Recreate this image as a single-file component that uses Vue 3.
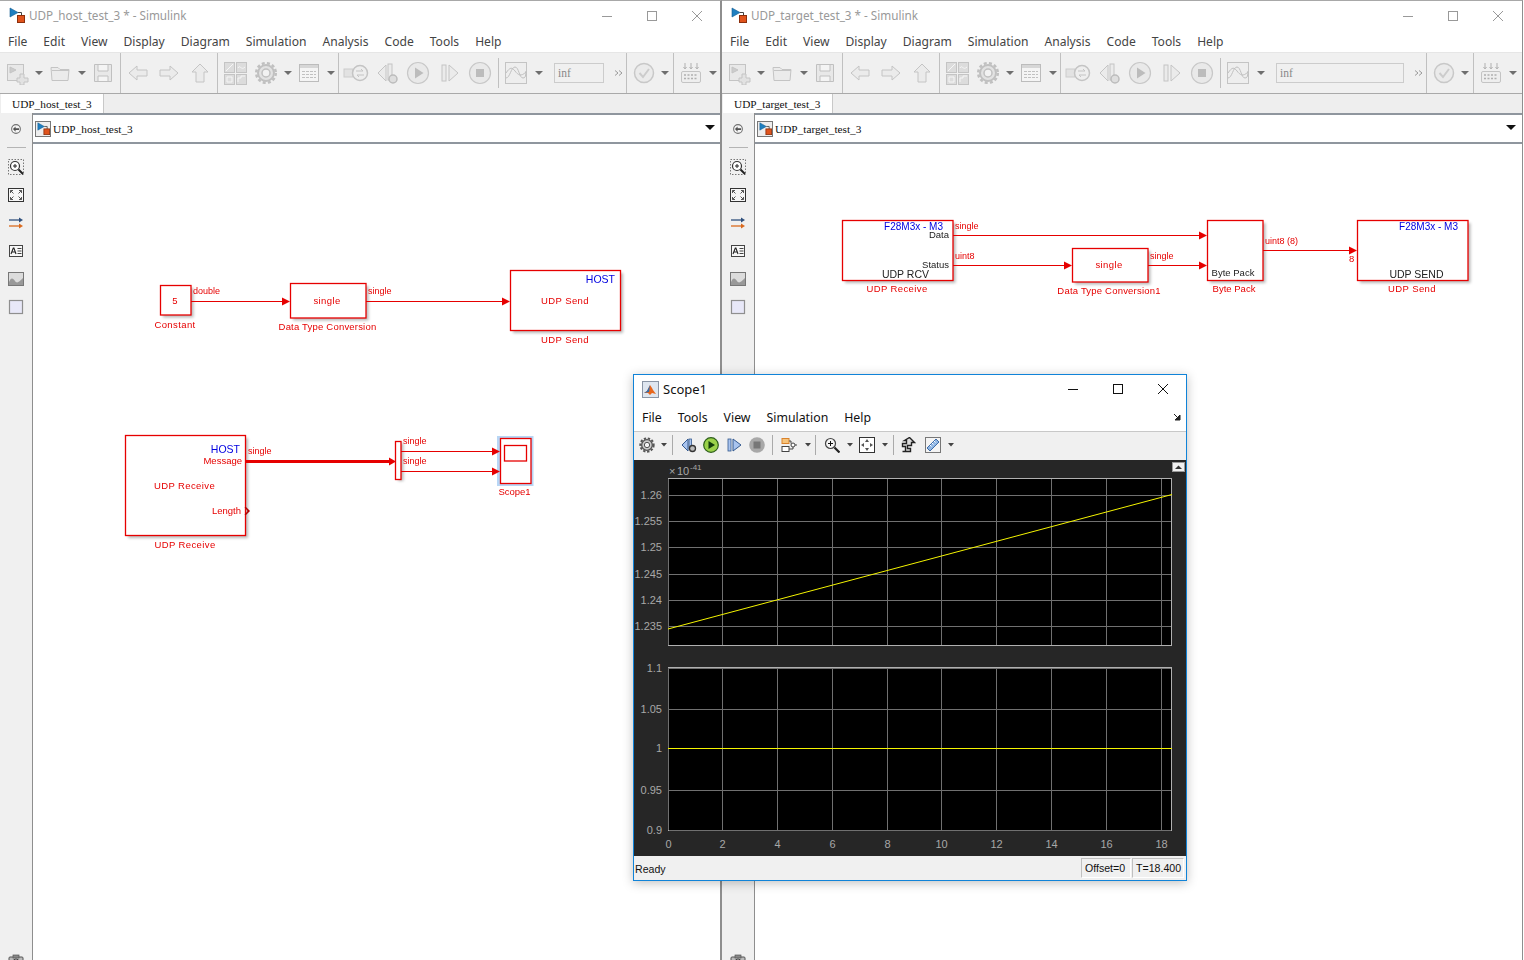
<script setup>
import { computed } from 'vue'

// toolbar: icon id, left position in the window, width
const baseTools = [
  ['new', 5, 24], ['dd', 35, 8], ['open', 48, 24], ['dd', 78, 8], ['save', 91, 24], ['sep', 120, 1],
  ['back', 126, 24], ['fwd', 157, 24], ['up', 188, 24], ['sep', 217, 1],
  ['lib', 223, 24], ['gear', 254, 24], ['dd', 284, 8], ['expl', 297, 24], ['dd', 327, 8], ['sep', 338, 1],
  ['rec', 343, 26], ['stepb', 376, 24], ['play', 406, 24], ['step', 437, 24], ['stop', 468, 24], ['sepshort', 498, 1],
  ['scope', 504, 24], ['dd', 535, 8]
]

const toolsFor = (infWidth) => {
  const shift = infWidth - 50
  const list = [
    ...baseTools,
    ['inf', 554, infWidth],
    ['more', 614 + shift, 10],
    ['sep', 626 + shift, 1],
    ['check', 632 + shift, 24],
    ['dd', 661 + shift, 8],
    ['sep', 673 + shift, 1],
    ['keys', 679 + shift, 24],
    ['dd', 709 + shift, 8]
  ]
  let end = 0
  return list.map(([icon, x, w]) => {
    const item = { icon, w, gap: x - end }
    end = x + w
    return item
  })
}

const menus = ['File', 'Edit', 'View', 'Display', 'Diagram', 'Simulation', 'Analysis', 'Code', 'Tools', 'Help']
const paletteIcons = ['pzoom', 'pfit', 'parrow', 'ptext', 'pimg', 'pbox']

const windows = computed(() => [
  { id: 'host', name: 'UDP_host_test_3', tools: toolsFor(50), viewBox: '33 144 687 816' },
  { id: 'target', name: 'UDP_target_test_3', tools: toolsFor(128), viewBox: '755 144 767 816' }
])

// scope axes
const xPos = (t) => Math.floor(668 + t * 27.39) + 0.5
const xTicks = [0, 2, 4, 6, 8, 10, 12, 14, 16, 18].map((t) => ({ t, x: xPos(t) }))
const topTicks = [
  ['1.26', 495.5], ['1.255', 521.5], ['1.25', 547.5], ['1.245', 574.5], ['1.24', 600.5], ['1.235', 626.5]
]
const lowTicks = [['1.1', 668.5], ['1.05', 709.5], ['1', 748.5], ['0.95', 790.5], ['0.9', 830.5]]

const scopeMenus = ['File', 'Tools', 'View', 'Simulation', 'Help']
</script>

<template>
  <div class="desktop">
    <!-- shared toolbar icons -->
    <svg class="defs" width="0" height="0">
      <symbol id="simlogo" viewBox="0 0 16 16">
        <path d="M1 1l8 4.5-8 4.500z" fill="#1f7fc0" stroke="#125a90" stroke-width=".6" />
        <path d="M9 5.500h3.500V9" fill="none" stroke="#444" />
        <rect x="8.500" y="8.500" width="7" height="7" fill="#e0531c" stroke="#8c2f0c" />
      </symbol>
      <symbol id="dd" viewBox="0 0 8 24"><path d="M0 10h8l-4 4z" fill="#6e6e6e" /></symbol>
      <symbol id="new" viewBox="0 0 24 24" fill="#e8e8e8" stroke="#c4c4c4">
        <rect x="2.500" y="3.500" width="16" height="16" />
        <path d="M5 6l6 3-6 3z" fill="#cccccc" />
        <path d="M15 13h4v4h4v4h-4v3h-4v-3h-3v-4h3z" fill="#e2e2e2" />
      </symbol>
      <symbol id="open" viewBox="0 0 24 24" fill="#ebebeb" stroke="#c4c4c4">
        <path d="M3 6.500h7l2 2h9l-1 11H4z" />
        <path d="M4 9.500h17" fill="none" />
      </symbol>
      <symbol id="save" viewBox="0 0 24 24" fill="#e8e8e8" stroke="#c0c0c0">
        <path d="M3.500 3.500h17v17h-17z" />
        <path d="M7 4v6h10V4M7 20v-5h10v5" fill="#f4f4f4" />
      </symbol>
      <symbol id="back" viewBox="0 0 24 24"><path d="M3 12l8-7v4h10v6H11v4z" fill="#ebebeb" stroke="#c4c4c4" /></symbol>
      <symbol id="fwd" viewBox="0 0 24 24"><path d="M21 12l-8-7v4H3v6h10v4z" fill="#ebebeb" stroke="#c4c4c4" /></symbol>
      <symbol id="up" viewBox="0 0 24 24"><path d="M12 3l8 8h-4v10H8V11H4z" fill="#ebebeb" stroke="#c4c4c4" /></symbol>
      <symbol id="lib" viewBox="0 0 24 24" fill="#dcdcdc" stroke="#c4c4c4">
        <rect x="1.500" y="1.500" width="10" height="10" /><rect x="13.500" y="1.500" width="10" height="10" />
        <rect x="1.500" y="13.500" width="10" height="10" /><rect x="13.500" y="13.500" width="10" height="10" />
        <path d="M3 10l7-7M15 7c2-4 3 3 7-1M4 16h5v5H4zM15 21v-4h3v-2h4" fill="none" stroke="#f6f6f6" />
      </symbol>
      <symbol id="gear" viewBox="0 0 24 24">
        <circle cx="12" cy="12" r="8" fill="#e2e2e2" stroke="#c0c0c0" stroke-width="2" />
        <circle cx="12" cy="12" r="9.800" fill="none" stroke="#c0c0c0" stroke-width="2.500" stroke-dasharray="3 2.200" />
        <circle cx="12" cy="12" r="4" fill="#f2f2f2" stroke="#c0c0c0" stroke-width="1.500" />
      </symbol>
      <symbol id="expl" viewBox="0 0 24 24">
        <rect x="2.500" y="3.500" width="19" height="17" fill="#f4f4f4" stroke="#bcbcbc" />
        <path d="M3 4h18v3H3z" fill="#d6d6d6" />
        <path d="M5 10.500h14M5 13.500h14M5 16.500h14" stroke="#c0c0c0" stroke-dasharray="3 1" />
      </symbol>
      <symbol id="rec" viewBox="0 0 26 24">
        <rect x="1" y="8" width="9" height="8" fill="#e2e2e2" stroke="#cccccc" />
        <circle cx="17" cy="12" r="7.500" fill="#eeeeee" stroke="#c4c4c4" stroke-width="1.500" />
        <path d="M13 10h7l-2-2M21 14h-7l2 2" fill="none" stroke="#c4c4c4" />
      </symbol>
      <symbol id="stepb" viewBox="0 0 24 24">
        <path d="M10 4L2 12l8 8z" fill="#ebebeb" stroke="#c4c4c4" />
        <rect x="12" y="3" width="4" height="16" fill="#ebebeb" stroke="#c4c4c4" />
        <circle cx="17" cy="18" r="4" fill="#dedede" stroke="#bcbcbc" stroke-width="1.500" />
      </symbol>
      <symbol id="play" viewBox="0 0 24 24">
        <circle cx="12" cy="12" r="10.500" fill="#e9e9e9" stroke="#c8c8c8" stroke-width="1.200" />
        <path d="M9 6.500L17.500 12 9 17.500z" fill="#bcbcbc" />
      </symbol>
      <symbol id="step" viewBox="0 0 24 24">
        <rect x="5" y="4" width="4" height="16" fill="#ebebeb" stroke="#c4c4c4" />
        <path d="M12 4l9 8-9 8z" fill="#ebebeb" stroke="#c4c4c4" />
      </symbol>
      <symbol id="stop" viewBox="0 0 24 24">
        <circle cx="12" cy="12" r="10.500" fill="#e9e9e9" stroke="#c8c8c8" stroke-width="1.200" />
        <rect x="8" y="8" width="8" height="8" fill="#bcbcbc" />
      </symbol>
      <symbol id="scope" viewBox="0 0 24 24">
        <rect x="1.500" y="1.500" width="21" height="21" fill="#eeeeee" stroke="#c4c4c4" />
        <path d="M2 17c4 0 5-11 9-11s4 11 8 11 2-6 3-7M2 12c4-6 6-6 9-2s6 6 11 1" fill="none" stroke="#c0c0c0" />
      </symbol>
      <symbol id="check" viewBox="0 0 24 24">
        <circle cx="12" cy="12" r="9.500" fill="#ebebeb" stroke="#c8c8c8" stroke-width="1.500" />
        <path d="M7.500 12l3.500 4 6-8" fill="none" stroke="#cccccc" stroke-width="2" />
      </symbol>
      <symbol id="keys" viewBox="0 0 24 24">
        <rect x="2.500" y="10.500" width="19" height="11" rx="1.500" fill="#eeeeee" stroke="#c4c4c4" />
        <path d="M5 14h14M5 17.500h14" stroke="#b0b0b0" stroke-width="1.500" stroke-dasharray="2 1.500" />
        <path d="M6 2v5M12 2v5M18 2v5M4.500 6L6 8l1.500-2M10.500 6L12 8l1.500-2M16.500 6L18 8l1.500-2" fill="none" stroke="#b0b0b0" />
      </symbol>
      <symbol id="more" viewBox="0 0 10 24">
        <path d="M1 9.500l3 2.500-3 2.500M5 9.500l3 2.500-3 2.500" fill="none" stroke="#9a9a9a" />
      </symbol>

      <symbol id="pback" viewBox="0 0 16 16">
        <circle cx="8" cy="8" r="5" fill="#f4f4f4" stroke="#707070" stroke-width="1.200" />
        <path d="M4.500 8l3-3v2h4v2h-4v2z" fill="#505050" />
      </symbol>
      <symbol id="pzoom" viewBox="0 0 16 16">
        <rect x=".5" y=".5" width="15" height="15" fill="none" stroke="#777" stroke-dasharray="1.500 1.500" />
        <circle cx="7" cy="7" r="4.500" fill="#fff" stroke="#333" stroke-width="1.200" />
        <path d="M5 7h4M7 5v4" stroke="#222" />
        <path d="M10.500 10.500l4.500 4.500" stroke="#222" stroke-width="2" />
      </symbol>
      <symbol id="pfit" viewBox="0 0 16 16">
        <rect x=".5" y="1.500" width="15" height="13" fill="#f6f6f6" stroke="#333" />
        <path d="M2.500 3.500l3 3M2.500 3.500h2.500M2.500 3.500V6M13.500 3.500l-3 3M13.500 3.500H11M13.500 3.500V6M2.500 12.500l3-3M2.500 12.500H5M2.500 12.500V10M13.500 12.500l-3-3M13.500 12.500H11M13.500 12.500V10" fill="none" stroke="#555" />
      </symbol>
      <symbol id="parrow" viewBox="0 0 16 16">
        <path d="M1 5h11" stroke="#2f4f7c" stroke-width="1.300" /><path d="M11 2.500L15 5l-4 2.500z" fill="#2f4f7c" />
        <path d="M1 11h11" stroke="#d9691e" stroke-width="1.300" /><path d="M11 8.500l4 2.500-4 2.500z" fill="#d9691e" />
      </symbol>
      <symbol id="ptext" viewBox="0 0 16 16">
        <rect x="1.500" y="2.500" width="13" height="11" fill="#f8f8f8" stroke="#444" />
        <path d="M3 11l2.300-6h.6L8 11M4 9h3" fill="none" stroke="#222" stroke-width="1.100" />
        <path d="M9.500 5.500h4M9.500 8h4M9.500 10.500h4" stroke="#444" />
      </symbol>
      <symbol id="pimg" viewBox="0 0 16 16">
        <rect x=".5" y="1.500" width="15" height="13" fill="#dcdcdc" stroke="#777" />
        <path d="M1 11c2-5 4-4 6-1s4 1 8-3v7H1z" fill="#999" />
      </symbol>
      <symbol id="pbox" viewBox="0 0 16 16">
        <rect x="1.500" y="1.500" width="13" height="13" fill="#e8e8f8" stroke="#8f8f8f" stroke-width="1.200" />
      </symbol>
      <symbol id="pcam" viewBox="0 0 16 16">
        <rect x="1" y="4" width="14" height="10" rx="1" fill="#bbb" stroke="#555" />
        <rect x="5" y="2" width="6" height="3" fill="#888" stroke="#555" stroke-width=".7" />
        <circle cx="8" cy="9" r="3" fill="#eee" stroke="#444" />
      </symbol>
    </svg>

    <section v-for="win in windows" :key="win.id" class="sim-win" :class="'sim-' + win.id">
      <header class="title-bar">
        <svg class="app-logo" width="16" height="16"><use href="#simlogo" /></svg>
        <span class="title-text">{{ win.name }} * - Simulink</span>
        <div class="win-btns">
          <svg width="10" height="10"><path d="M0 5.500h10" stroke="#999" /></svg>
          <svg width="10" height="10"><rect x=".5" y=".5" width="9" height="9" fill="none" stroke="#999" /></svg>
          <svg width="10" height="10"><path d="M0 0l10 10M10 0L0 10" stroke="#999" /></svg>
        </div>
      </header>

      <nav class="menu-bar">
        <span v-for="m in menus" :key="m">{{ m }}</span>
      </nav>

      <div class="tool-bar">
        <template v-for="(t, i) in win.tools" :key="i">
          <i v-if="t.icon === 'sep'" class="sep" :style="{ marginLeft: t.gap + 'px' }"></i>
          <i v-else-if="t.icon === 'sepshort'" class="sep short" :style="{ marginLeft: t.gap + 'px' }"></i>
          <span v-else-if="t.icon === 'inf'" class="inf-box" :style="{ marginLeft: t.gap + 'px', width: t.w + 'px' }">inf</span>
          <svg v-else :width="t.w" height="24" :style="{ marginLeft: t.gap + 'px' }"><use :href="'#' + t.icon" /></svg>
        </template>
      </div>

      <div class="tab-bar">
        <span class="tab">{{ win.name }}</span>
      </div>

      <div class="work">
        <aside class="palette">
          <svg class="p-back" width="14" height="14"><use href="#pback" /></svg>
          <i class="p-rule"></i>
          <svg v-for="p in paletteIcons" :key="p" class="p-icon" width="16" height="16"><use :href="'#' + p" /></svg>
          <svg class="p-cam" width="16" height="16"><use href="#pcam" /></svg>
        </aside>

        <div class="editor">
          <div class="address">
            <span class="addr-logo"><svg width="13" height="13"><use href="#simlogo" /></svg></span>
            <span class="addr-text">{{ win.name }}</span>
            <svg class="addr-drop" width="10" height="6"><path d="M0 0h10L5 5z" fill="#111" /></svg>
          </div>

          <!-- host model -->
          <svg v-if="win.id === 'host'" class="canvas" :viewBox="win.viewBox">
            <g class="shadows">
              <rect x="163" y="288" width="30.500" height="29.500" />
              <rect x="293" y="286" width="75.500" height="34.500" />
              <rect x="513" y="273" width="110" height="60" />
              <rect x="128" y="438" width="120" height="100" />
              <rect x="398" y="443" width="5.500" height="38" />
            </g>
            <rect x="497" y="436" width="36.500" height="50" fill="#b8d6f5" />
            <g class="blocks">
              <rect x="160.500" y="285.500" width="30.500" height="29.500" />
              <rect x="290.500" y="283.500" width="75.500" height="34.500" />
              <rect x="510.500" y="270.500" width="110" height="60" />
              <rect x="125.500" y="435.500" width="120" height="100" />
              <rect x="395.500" y="441.500" width="5.500" height="38" />
              <rect x="500.500" y="438.500" width="30.500" height="45" />
              <rect x="504.500" y="445.500" width="22" height="15.500" />
            </g>
            <g class="wires">
              <path d="M191 301.500h92M366 301.500h137M401 451.500h91M401 471.500h91" />
              <path d="M246 461.500h144" class="thick" />
            </g>
            <g class="heads">
              <path d="M282 297.500l8 4-8 4zM502 297.500l8 4-8 4zM389 457.500l7 4-7 4zM492 447.500l8 4-8 4zM492 467.500l8 4-8 4z" />
              <path d="M246 507l4 4-4 4-1.500 0 3-4-3-4z" class="dark" />
            </g>
            <g class="labels">
              <text x="175" y="304" text-anchor="middle">5</text>
              <text x="175" y="328" text-anchor="middle" class="wide">Constant</text>
              <text x="193" y="294" class="sig">double</text>
              <text x="327" y="304" text-anchor="middle" class="wide">single</text>
              <text x="327.500" y="330" text-anchor="middle" class="mid">Data Type Conversion</text>
              <text x="368" y="294" class="sig">single</text>
              <text x="615" y="283" text-anchor="end" class="blue">HOST</text>
              <text x="565" y="304" text-anchor="middle" class="wide">UDP Send</text>
              <text x="565" y="343" text-anchor="middle" class="wide">UDP Send</text>
              <text x="240" y="453" text-anchor="end" class="blue">HOST</text>
              <text x="242" y="464" text-anchor="end">Message</text>
              <text x="184.500" y="489" text-anchor="middle" class="wide">UDP Receive</text>
              <text x="241" y="514" text-anchor="end">Length</text>
              <text x="185" y="548" text-anchor="middle" class="wide">UDP Receive</text>
              <text x="248" y="454" class="sig">single</text>
              <text x="403" y="444" class="sig">single</text>
              <text x="403" y="464" class="sig">single</text>
              <text x="514.500" y="495" text-anchor="middle">Scope1</text>
            </g>
          </svg>

          <!-- target model -->
          <svg v-else class="canvas" :viewBox="win.viewBox">
            <g class="shadows">
              <rect x="845" y="223" width="110.500" height="60" />
              <rect x="1075" y="251" width="75.500" height="33.500" />
              <rect x="1210" y="223" width="55.500" height="60" />
              <rect x="1360" y="223" width="110.500" height="60" />
            </g>
            <g class="blocks">
              <rect x="842.500" y="220.500" width="110.500" height="60" />
              <rect x="1072.500" y="248.500" width="75.500" height="33.500" />
              <rect x="1207.500" y="220.500" width="55.500" height="60" />
              <rect x="1357.500" y="220.500" width="110.500" height="60" />
            </g>
            <g class="wires">
              <path d="M953 235.500h247M953 265.500h112M1148 265.500h52M1263 250.500h87" />
            </g>
            <g class="heads">
              <path d="M1199 231.500l8 4-8 4zM1064 261.500l8 4-8 4zM1199 261.500l8 4-8 4zM1349 246.500l8 4-8 4z" />
            </g>
            <g class="labels">
              <text x="943" y="230" text-anchor="end" class="blue f28">F28M3x - M3</text>
              <text x="949" y="238" text-anchor="end" class="ink">Data</text>
              <text x="949" y="268" text-anchor="end" class="ink">Status</text>
              <text x="905.500" y="278" text-anchor="middle" class="ink big">UDP RCV</text>
              <text x="897" y="292" text-anchor="middle" class="wide">UDP Receive</text>
              <text x="955" y="229" class="sig">single</text>
              <text x="955" y="259" class="sig">uint8</text>
              <text x="1109" y="268" text-anchor="middle" class="wide">single</text>
              <text x="1109" y="294" text-anchor="middle" class="mid">Data Type Conversion1</text>
              <text x="1150" y="259" class="sig">single</text>
              <text x="1233" y="276" text-anchor="middle" class="ink">Byte Pack</text>
              <text x="1234" y="292" text-anchor="middle">Byte Pack</text>
              <text x="1265" y="244" class="sig">uint8 (8)</text>
              <text x="1349" y="262">8</text>
              <text x="1458" y="230" text-anchor="end" class="blue f28">F28M3x - M3</text>
              <text x="1416.500" y="278" text-anchor="middle" class="ink big">UDP SEND</text>
              <text x="1412" y="292" text-anchor="middle" class="wide">UDP Send</text>
            </g>
          </svg>
        </div>
      </div>
    </section>

    <!-- floating scope window -->
    <section class="scope-win">
      <header class="scope-title">
        <svg class="scope-logo" width="17" height="17" viewBox="0 0 17 17">
          <rect x=".5" y=".5" width="16" height="16" fill="#dfe6ef" stroke="#8a95a5" />
          <path d="M2 12l3-2 3-6 2 3 1 2 3 4-4-1-2 2-2-2z" fill="#e8671c" />
          <path d="M2 12l3-2 3-6-1 7z" fill="#2a6fb5" />
        </svg>
        <span>Scope1</span>
        <div class="scope-btns">
          <svg width="10" height="10"><path d="M0 5.500h10" stroke="#111" /></svg>
          <svg width="10" height="10"><rect x=".5" y=".5" width="9" height="9" fill="none" stroke="#111" /></svg>
          <svg width="10" height="10"><path d="M0 0l10 10M10 0L0 10" stroke="#111" /></svg>
        </div>
      </header>

      <nav class="scope-menu">
        <span v-for="m in scopeMenus" :key="m">{{ m }}</span>
        <svg class="undock" width="7" height="7"><path d="M0 0l5 5M6 1v5H1z" stroke="#222" fill="#222" /></svg>
      </nav>

      <div class="scope-tools">
        <svg width="16" height="16" viewBox="0 0 24 24">
          <circle cx="12" cy="12" r="8" fill="#ccc" stroke="#555" stroke-width="2" />
          <circle cx="12" cy="12" r="10" fill="none" stroke="#555" stroke-width="3" stroke-dasharray="3.500 2.500" />
          <circle cx="12" cy="12" r="4" fill="#f4f4f4" stroke="#555" stroke-width="1.500" />
        </svg>
        <svg class="m6" width="6" height="4"><path d="M0 0h6L3 3.500z" fill="#444" /></svg>
        <i class="st-sep m5"></i>
        <svg class="m8" width="16" height="16" viewBox="0 0 16 16">
          <path d="M7 2L1 8l6 6z" fill="#a9c4ee" stroke="#33598f" />
          <rect x="8" y="2" width="2.500" height="10" fill="#a9c4ee" stroke="#33598f" stroke-width=".8" />
          <circle cx="11.500" cy="11.500" r="3" fill="#bbb" stroke="#333" stroke-width="1.300" />
        </svg>
        <svg class="m6" width="16" height="16" viewBox="0 0 16 16">
          <circle cx="8" cy="8" r="7.300" fill="#9ad24a" stroke="#2c5e1a" stroke-width="1.200" />
          <path d="M5.500 4L12 8l-6.500 4z" fill="#123d0b" />
        </svg>
        <svg class="m8" width="15" height="16" viewBox="0 0 15 16">
          <rect x="1" y="2" width="3" height="12" fill="#a9c4ee" stroke="#33598f" stroke-width=".8" />
          <path d="M6 2l8 6-8 6z" fill="#a9c4ee" stroke="#33598f" />
        </svg>
        <svg class="m7" width="16" height="16" viewBox="0 0 16 16">
          <circle cx="8" cy="8" r="7.800" fill="#a8a8a8" />
          <rect x="4.500" y="4.500" width="7" height="7" fill="#777" />
        </svg>
        <i class="st-sep m7"></i>
        <svg class="m8" width="17" height="16" viewBox="0 0 17 16">
          <rect x="1" y="1.500" width="7" height="5" fill="#f6c47c" stroke="#d9822b" />
          <rect x="1" y="9.500" width="7" height="5" fill="#fff" stroke="#444" />
          <circle cx="12" cy="8" r="2" fill="#fff" stroke="#444" />
          <path d="M8 4h2v2.500M8 12h4v-2M14 8h2" fill="none" stroke="#444" />
        </svg>
        <svg class="m7" width="6" height="4"><path d="M0 0h6L3 3.500z" fill="#444" /></svg>
        <i class="st-sep m4"></i>
        <svg class="m8" width="16" height="16" viewBox="0 0 16 16">
          <circle cx="6.500" cy="6.500" r="5" fill="#f4f4f4" stroke="#444" stroke-width="1.200" />
          <path d="M4 6.500h5M6.500 4v5" stroke="#111" />
          <path d="M10.500 10.500l5 5" stroke="#222" stroke-width="2.200" />
        </svg>
        <svg class="m7" width="6" height="4"><path d="M0 0h6L3 3.500z" fill="#444" /></svg>
        <svg class="m6" width="16" height="16" viewBox="0 0 16 16">
          <rect x=".5" y=".5" width="15" height="15" fill="#fff" stroke="#333" />
          <path d="M8 2l2 3H6zM8 14l2-3H6zM2 8l3-2v4zM14 8l-3-2v4z" fill="#555" />
        </svg>
        <svg class="m7" width="6" height="4"><path d="M0 0h6L3 3.500z" fill="#444" /></svg>
        <i class="st-sep m5"></i>
        <svg class="m7" width="15" height="16" viewBox="0 0 15 16">
          <path d="M1.500 14.500h3v-5h-3v-3h4v-3h-2l5-3 5 5h-3v3h-4v3h3v3h-8z" fill="#ddd" stroke="#222" stroke-width="1.400" />
        </svg>
        <svg class="m9" width="16" height="16" viewBox="0 0 16 16">
          <rect x=".5" y=".5" width="15" height="15" fill="#f4f4f4" stroke="#777" />
          <path d="M2 11L11 2l3 3-9 9z" fill="#8fb6e4" stroke="#3f6ca8" />
          <path d="M5 8l1.500 1.500M7 6l1.500 1.500M9 4l1.500 1.500" stroke="#fff" />
        </svg>
        <svg class="m7" width="6" height="4"><path d="M0 0h6L3 3.500z" fill="#444" /></svg>
      </div>

      <svg class="plot" viewBox="634 460 552 396">
        <rect x="634" y="460" width="552" height="396" fill="#262626" />
        <rect x="1172.500" y="462.500" width="12" height="9" fill="#f0f0f0" stroke="#999" />
        <path d="M1175 469l3.500-3.500 3.500 3.500z" fill="#333" />

        <text x="669" y="475" class="ax small">×</text>
        <text x="677" y="475" class="ax">10</text>
        <text x="690" y="470" class="ax tiny">-41</text>

        <rect x="668.500" y="478.500" width="503" height="167" fill="#000" stroke="#b0b0b0" />
        <rect x="668.500" y="667.500" width="503" height="163" fill="#000" stroke="#b0b0b0" />

        <g class="grid">
          <template v-for="tk in xTicks" :key="tk.t">
            <path :d="`M${tk.x} 479V645M${tk.x} 668V830`" />
          </template>
          <path v-for="tk in topTicks" :key="tk[0]" :d="`M669 ${tk[1]}H1171`" />
          <path v-for="tk in lowTicks" :key="tk[0]" :d="`M669 ${tk[1]}H1171`" />
        </g>

        <path d="M668 629L1172 494.500M668 748.500H1172" stroke="#f4f400" fill="none" />

        <text v-for="tk in topTicks" :key="'l' + tk[0]" x="662" :y="tk[1] + 3" text-anchor="end" class="ax">{{ tk[0] }}</text>
        <text v-for="tk in lowTicks" :key="'l' + tk[0]" x="662" :y="tk[1] + 3" text-anchor="end" class="ax">{{ tk[0] }}</text>
        <text v-for="tk in xTicks" :key="'x' + tk.t" :x="tk.x" y="848" text-anchor="middle" class="ax">{{ tk.t }}</text>
      </svg>

      <footer class="scope-status">
        <span class="ready">Ready</span>
        <span class="st-cell offset">Offset=0</span>
        <span class="st-cell time">T=18.400</span>
      </footer>
    </section>
  </div>
</template>

<style>
html, body { margin: 0; background: #fff; }
</style>

<style scoped>
.desktop {
  position: relative;
  display: flex;
  width: 1524px;
  height: 960px;
  overflow: hidden;
  background: #fff;
  font-family: "Noto Sans", "Open Sans", sans-serif;
}
.defs { position: absolute; }

.sim-win {
  display: flex;
  flex-direction: column;
  flex: none;
  height: 960px;
  border-top: 1px solid #a8a8a8;
  box-sizing: border-box;
  overflow: hidden;
  background: #fff;
}
.sim-host { width: 722px; border-right: 2px solid #8e8e8e; }
.sim-target { width: 801px; border-right: 1px solid #8e8e8e; }

.title-bar {
  display: flex;
  align-items: center;
  height: 29px;
  padding-left: 9px;
  padding-right: 18px;
  font-size: 11.700px;
  color: #999;
}
.sim-target .title-bar { padding-right: 19px; }
.app-logo { margin-top: -1px; }
.title-text { margin-left: 4px; margin-top: -2px; }
.win-btns { display: flex; gap: 35px; margin-left: auto; }

.menu-bar {
  display: flex;
  align-items: center;
  gap: 16px;
  height: 22px;
  padding-left: 8px;
  font-size: 12.100px;
  color: #444;
}

.tool-bar {
  display: flex;
  align-items: center;
  height: 40px;
  background: #f0f0f0;
  border-top: 1px solid #e6e6e6;
  border-bottom: 1px solid #a9a9a9;
}
.sep { align-self: stretch; flex: none; width: 1px; background: #c0c0c0; }
.sep.short { margin-top: 5px; margin-bottom: 5px; }
.inf-box {
  box-sizing: border-box;
  flex: none;
  height: 20px;
  padding-left: 3px;
  border: 1px solid #cccccc;
  background: #f0f0f0;
  font: 11.500px/18px "Liberation Serif", serif;
  color: #888;
}
.tool-bar svg { flex: none; }

.tab-bar {
  display: flex;
  height: 19px;
  background: #eee;
}
.tab {
  box-sizing: border-box;
  width: 103px;
  margin-left: 1px;
  padding-left: 11px;
  padding-top: 1px;
  background: #fff;
  border-right: 1px solid #c8c8c8;
  font: 11.300px/19px "Liberation Serif", serif;
  color: #111;
  white-space: nowrap;
}
.sim-target .tab { width: 110px; }

.work { display: flex; flex: 1; min-height: 0; }

.palette {
  display: flex;
  flex-direction: column;
  align-items: center;
  flex: none;
  width: 32px;
  background: #f0f0f0;
  border-right: 1px solid #8e8e8e;
}
.p-back { margin-top: 9px; }
.p-rule { width: 19px; height: 1px; margin-top: 11px; margin-bottom: 11px; background: #b4b4b4; }
.p-icon { margin-bottom: 12px; }
.p-cam { margin-top: auto; margin-bottom: -9px; }

.editor { display: flex; flex-direction: column; flex: 1; min-width: 0; }

.address {
  box-sizing: border-box;
  display: flex;
  align-items: center;
  flex: none;
  height: 31px;
  padding: 0 5px 0 2px;
  border-top: 2px solid #8f969e;
  border-bottom: 2px solid #8f969e;
  background: #fff;
}
.sim-target .address { padding-right: 6px; }
.addr-logo {
  display: flex;
  align-items: center;
  justify-content: center;
  box-sizing: border-box;
  width: 16px;
  height: 16px;
  border: 1px solid #777;
  background: #eee;
}
.addr-text { margin-left: 2px; font: 11.300px "Liberation Serif", serif; color: #111; }
.addr-drop { margin-left: auto; margin-top: -2px; }

.canvas {
  flex: 1;
  display: block;
  width: 100%;
  min-height: 0;
  background: #fff;
  filter: blur(0.25px);
}
.shadows rect { fill: #000; opacity: 0.28; filter: blur(1.5px); }
.blocks rect { fill: #fff; stroke: #e60000; stroke-width: 1.3; }
.wires path { fill: none; stroke: #e60000; stroke-width: 1; }
.wires .thick { stroke-width: 3; }
.heads path { fill: #e60000; }
.heads .dark { fill: #b00000; }
.labels text {
  font-family: "Liberation Sans", Arial, sans-serif;
  font-size: 9.500px;
  fill: #e60000;
}
.labels .sig { font-size: 9px; }
.labels .wide { letter-spacing: 0.4px; }
.labels .mid { letter-spacing: 0.2px; }
.labels .blue { fill: #0000e0; font-size: 10.500px; }
.labels .f28 { font-size: 10px; }
.labels .ink { fill: #222; }
.labels .big { font-size: 10.500px; }

/* scope window */
.scope-win {
  position: absolute;
  left: 633px;
  top: 374px;
  box-sizing: border-box;
  display: flex;
  flex-direction: column;
  width: 554px;
  height: 507px;
  border: 1px solid #1083d8;
  background: #fff;
  box-shadow: 0 2px 10px rgba(0, 0, 0, 0.25);
}
.scope-title {
  display: flex;
  align-items: center;
  flex: none;
  height: 28px;
  padding-left: 8px;
  font-size: 13px;
  color: #111;
}
.scope-logo { margin-right: 4px; }
.scope-btns { display: flex; gap: 35px; margin-left: auto; margin-right: 18px; }

.scope-menu {
  display: flex;
  align-items: center;
  flex: none;
  gap: 16px;
  height: 28px;
  padding: 0 5px 0 8px;
  font-size: 12.300px;
  color: #111;
}
.undock { margin-left: auto; }

.scope-tools {
  display: flex;
  align-items: center;
  flex: none;
  height: 29px;
  padding-left: 5px;
  padding-bottom: 3px;
  background: #f0f0f0;
  border-top: 1px solid #c8c8c8;
  box-sizing: border-box;
}
.scope-tools svg { flex: none; }
.st-sep { flex: none; width: 1px; height: 20px; background: #aaa; }
.m4 { margin-left: 4px; }
.m5 { margin-left: 5px; }
.m6 { margin-left: 6px; }
.m7 { margin-left: 7px; }
.m8 { margin-left: 8px; }
.m9 { margin-left: 9px; }

.plot { display: block; flex: none; width: 552px; height: 396px; }
.grid path { fill: none; stroke: #707070; stroke-width: 1; }
.ax {
  font-family: "Liberation Sans", Arial, sans-serif;
  font-size: 11px;
  fill: #a8a8a8;
}
.small { font-size: 11px; }
.tiny { font-size: 8px; }

.scope-status {
  display: flex;
  align-items: center;
  flex: 1;
  padding: 0 2px 0 1px;
  background: #f0f0f0;
  font: 10.600px "Liberation Sans", Arial, sans-serif;
  color: #111;
}
.ready { margin-right: auto; padding-top: 1px; }
.st-cell {
  box-sizing: border-box;
  height: 20px;
  padding: 0 3px;
  line-height: 19px;
  border: 1px solid #c0c0c0;
  border-right-color: #fff;
  border-bottom-color: #fff;
  white-space: nowrap;
}
.offset { width: 50px; margin-right: 1px; }
.time { width: 52px; }
</style>
